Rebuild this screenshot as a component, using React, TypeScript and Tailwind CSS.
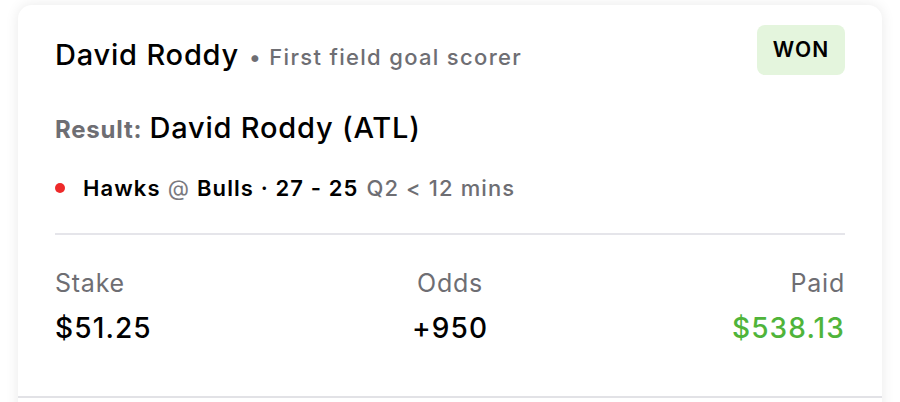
const font = { fontFamily: "Inter, 'Noto Sans', sans-serif" };

const Stat: React.FC<{ label: string; value: string; align: string; valueClass?: string }> = ({
  label,
  value,
  align,
  valueClass = "text-black",
}) => (
  <div className={`flex flex-1 flex-col ${align}`}>
    <span className="text-[25px] leading-[30px] tracking-[0.03em] text-[#6e6e73]">{label}</span>
    <span className={`mt-[13px] text-[28px] font-medium leading-[34px] tracking-[0.04em] ${valueClass}`}>
      {value}
    </span>
  </div>
);

export default function App() {
  return (
    <div className="h-[402px] w-[900px] overflow-hidden bg-white pt-[5px]" style={font}>
      <div className="mx-[18px] h-[420px] rounded-[14px] bg-white shadow-[0_0_14px_rgba(0,0,0,0.09)]">
        <div className="px-[37px] pt-[20px]">
          <div className="flex items-start justify-between">
            <div className="mt-[12px] flex items-baseline tracking-[0.05em]">
              <span className="text-[29px] font-medium leading-[35px] text-black">David Roddy</span>
              <span className="ml-[10px] text-[22px] font-medium tracking-[0.06em] text-[#6e6e73]">
                • First field goal scorer
              </span>
            </div>
            <div className="flex h-[50px] w-[88px] items-center justify-center rounded-lg bg-[#e4f5dd] text-[21px] font-semibold tracking-[0.05em] text-black">
              WON
            </div>
          </div>

          <div className="mt-[36px] flex items-baseline tracking-[0.05em]">
            <span className="text-[24px] font-bold text-[#6e6e73]">Result:</span>
            <span className="ml-[7px] text-[29px] font-medium leading-[34px] text-black">
              David Roddy (ATL)
            </span>
          </div>

          <div className="mt-[26px] flex items-center text-[22px] leading-[28px] tracking-[0.05em]">
            <span className="mr-[18px] h-[10px] w-[10px] rounded-full bg-[#ee2a2a]" />
            <span className="font-semibold text-black">Hawks</span>
            <span className="mx-[7px] text-[#7a7a7f]">@</span>
            <span className="font-semibold text-black">Bulls · 27 - 25</span>
            <span className="ml-[8px] font-medium text-[#6e6e73]">Q2 &lt; 12 mins</span>
          </div>

          <div className="mt-[31px] h-[2px] bg-[#e5e5ea]" />

          <div className="mt-[33px] flex">
            <Stat label="Stake" value="$51.25" align="items-start" />
            <Stat label="Odds" value="+950" align="items-center" />
            <Stat label="Paid" value="$538.13" align="items-end" valueClass="text-[#4fb43a]" />
          </div>
        </div>
        <div className="mt-[51px] h-[2px] bg-[#e2e2e6]" />
      </div>
    </div>
  );
}
